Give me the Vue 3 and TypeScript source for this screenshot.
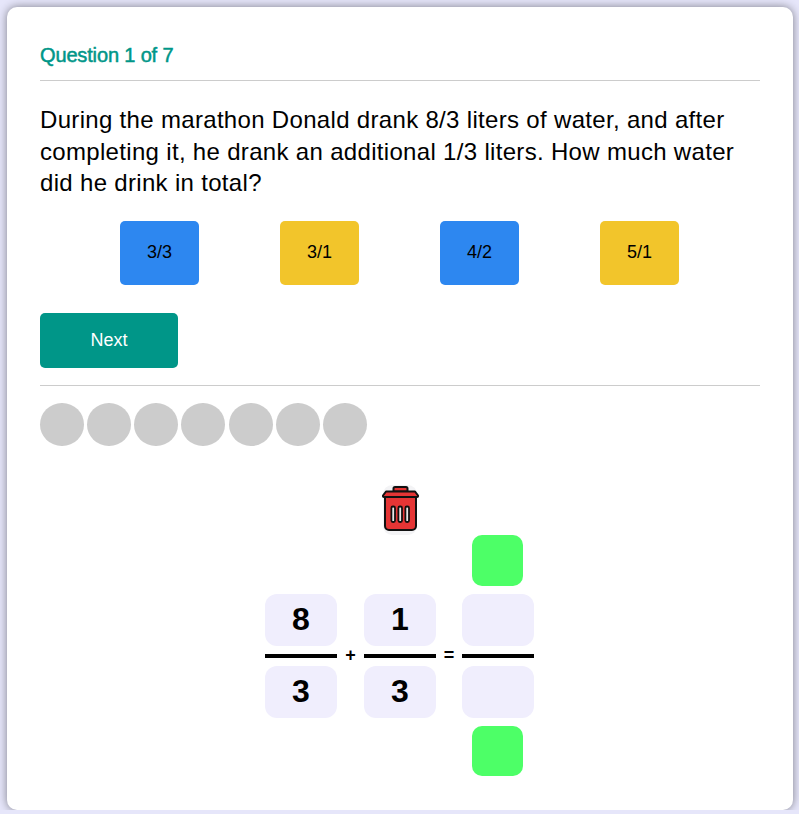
<script setup lang="ts">
interface Option { label: string; tone: string }
const options: Option[] = [
  { label: '3/3', tone: 'blue' },
  { label: '3/1', tone: 'yellow' },
  { label: '4/2', tone: 'blue' },
  { label: '5/1', tone: 'yellow' },
]
const dots: number[] = [1, 2, 3, 4, 5, 6, 7]
</script>

<template>
  <main class="card">
    <div class="counter">Question 1 of 7</div>
    <p class="question">During the marathon Donald drank 8/3 liters of water, and after completing it, he drank an additional 1/3 liters. How much water did he drink in total?</p>
    <div class="options">
      <button v-for="o in options" :key="o.label" class="option" :class="o.tone">{{ o.label }}</button>
    </div>
    <button class="next">Next</button>
    <div class="dots">
      <span v-for="d in dots" :key="d" class="dot"></span>
    </div>
    <section class="board">
      <div class="trash">
        <svg width="40" height="50" viewBox="0 0 40 50">
          <rect x="3" y="0" width="34" height="50" rx="9" fill="#f3f3f5" />
          <path d="M13.5 6.5 V3.5 a1.5 1.5 0 0 1 1.5 -1.5 h11 a1.5 1.5 0 0 1 1.5 1.5 V6.5 Z" fill="#e53535" stroke="#111" stroke-width="2" />
          <path d="M6 6.5 H35 L38 10.5 Q38.300 12 37 12 H4 Q2.700 12 3 10.500 Z" fill="#e53535" stroke="#111" stroke-width="2" stroke-linejoin="round" />
          <path d="M5 12 H36 V41 a4 4 0 0 1 -4 4 H9 a4 4 0 0 1 -4 -4 Z" fill="#e53535" stroke="#111" stroke-width="2" />
          <g fill="#e8e8e8" stroke="#111" stroke-width="1.8">
            <rect x="11.400" y="21.500" width="3.600" height="15.500" rx="1.500" />
            <rect x="18.400" y="21.500" width="3.600" height="15.500" rx="1.500" />
            <rect x="25.400" y="21.500" width="3.600" height="15.500" rx="1.500" />
          </g>
        </svg>
      </div>
      <div class="equation">
        <div class="fraction">
          <div class="tile">8</div>
          <div class="bar"></div>
          <div class="tile">3</div>
        </div>
        <span class="op op-plus">+</span>
        <div class="fraction">
          <div class="tile">1</div>
          <div class="bar"></div>
          <div class="tile">3</div>
        </div>
        <span class="op">=</span>
        <div class="fraction answer">
          <div class="drop top"></div>
          <div class="tile"></div>
          <div class="bar"></div>
          <div class="tile"></div>
          <div class="drop bottom"></div>
        </div>
      </div>
    </section>
  </main>
</template>

<style>
html, body { margin: 0; background: #e6e6fa; }
</style>

<style scoped>
.card {
  box-sizing: border-box;
  width: 786px;
  height: 803px;
  margin: 7px 0 0 7px;
  padding: 33px 33px 0;
  background: #fff;
  border-radius: 10px;
  box-shadow: 0 0 10px rgba(0, 0, 0, 0.45);
  font-family: "Liberation Sans", Arial, sans-serif;
  color: #000;
}
.counter {
  height: 41px;
  line-height: 30px;
  box-sizing: border-box;
  border-bottom: 1px solid #ccc;
  color: #009688;
  font-size: 20px;
  letter-spacing: -0.15px;
  -webkit-text-stroke: 0.5px #009688;
}
.question {
  margin: 23px 0 0;
  font-size: 24px;
  line-height: 31.5px;
  letter-spacing: 0.32px;
}
.options {
  display: flex;
  justify-content: center;
  gap: 81px;
  padding-right: 1px;
  margin-top: 22px;
}
.option {
  width: 79px;
  height: 64px;
  border: 0;
  border-radius: 5px;
  padding: 0;
  font: 18px "Liberation Sans", Arial, sans-serif;
  color: #000;
}
.blue { background: #2d87f0; }
.yellow { background: #f2c52b; }
.next {
  display: block;
  width: 138px;
  height: 55px;
  margin-top: 28px;
  border: 0;
  border-radius: 5px;
  padding: 0;
  background: #009688;
  color: #fff;
  font: 18px "Liberation Sans", Arial, sans-serif;
}
.dots {
  display: flex;
  gap: 3.15px;
  margin-top: 17px;
  padding-top: 17px;
  border-top: 1px solid #ccc;
}
.dot {
  width: 44px;
  height: 43.5px;
  border-radius: 50%;
  background: #ccc;
}
.board {
  display: flex;
  flex-direction: column;
  align-items: center;
}
.trash {
  height: 50px;
  margin-top: 38.5px;
}
.trash svg { display: block; }
.equation {
  display: flex;
  align-items: center;
  justify-content: center;
  margin-right: 1px;
}
.fraction {
  display: flex;
  flex-direction: column;
  width: 72px;
  margin-top: 59px;
}
.answer {
  position: relative;
}
.tile {
  display: flex;
  align-items: center;
  justify-content: center;
  height: 52px;
  border-radius: 12px;
  background: #f0eefd;
  font-size: 32px;
  font-weight: 700;
}
.bar {
  height: 4px;
  margin: 8px 0;
  background: #000;
}
.op {
  width: 26px;
  margin-top: 59px;
  text-align: center;
  font-size: 18px;
  font-weight: 700;
}
.op-plus { width: 27px; }
.drop {
  position: absolute;
  left: 10px;
  width: 51px;
  border-radius: 10px;
  background: #4dff67;
}
.top { top: -59px; height: 51px; }
.bottom { bottom: -58px; height: 50px; }
</style>
